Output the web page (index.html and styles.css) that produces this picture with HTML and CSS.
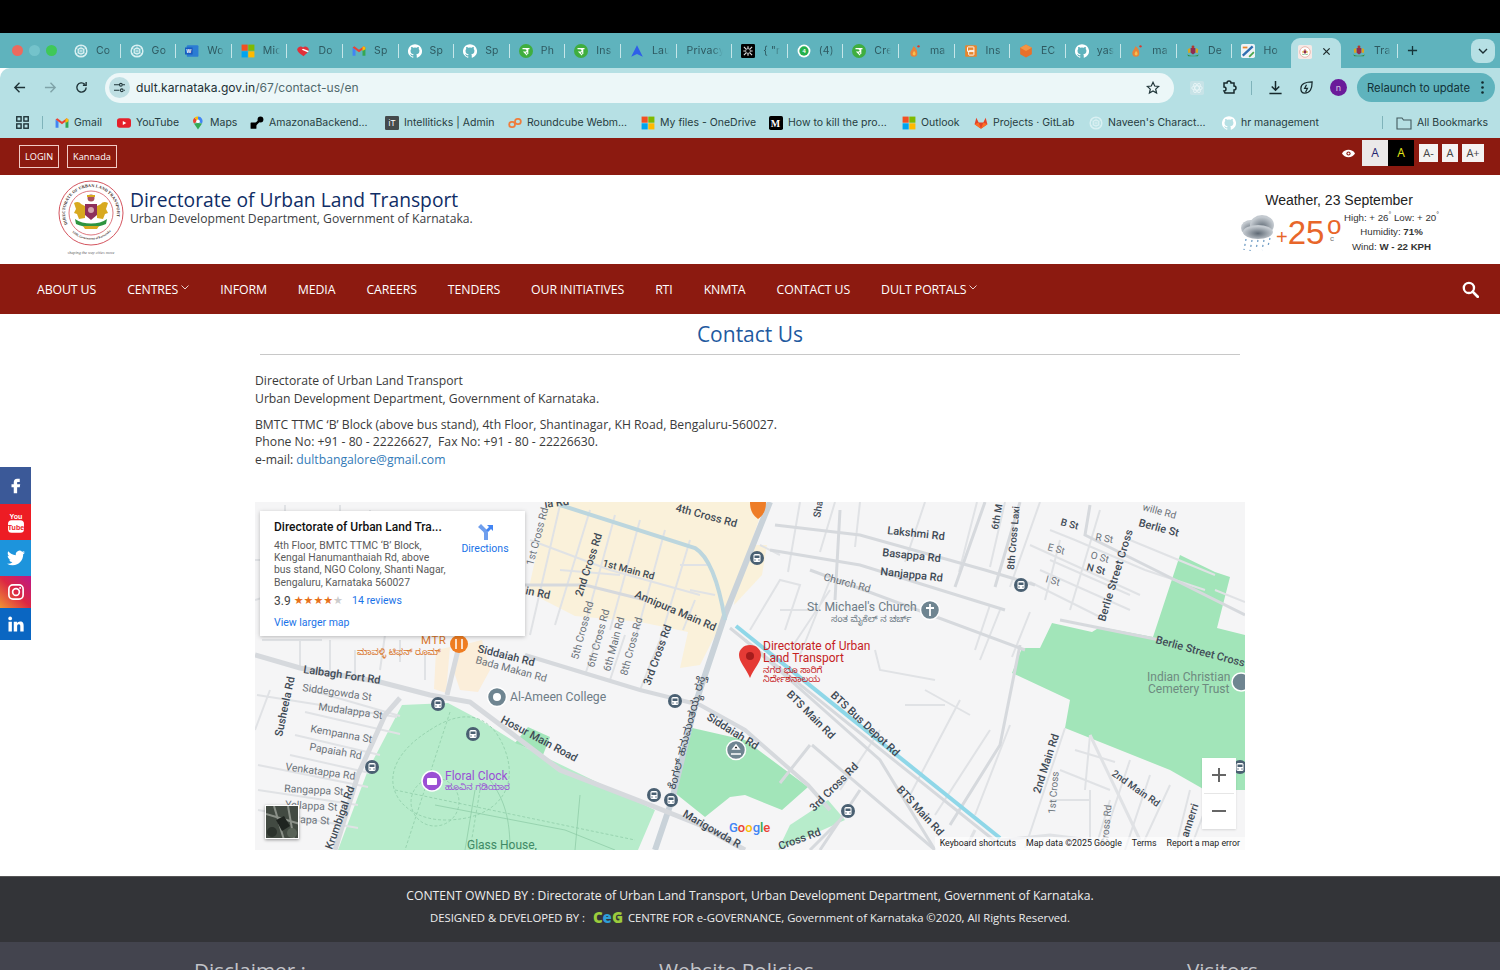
FILE: index.html
```html
<!DOCTYPE html>
<html lang="en">
<head>
<meta charset="utf-8">
<title>Contact Us - Directorate of Urban Land Transport</title>
<link rel="stylesheet" href="styles.css">
</head>
<body>
<svg class="defs" width="0" height="0" aria-hidden="true">
  <symbol id="gh" viewBox="0 0 24 24"><path fill="#fff" d="M12 .3a12 12 0 0 0-3.800 23.400c.6.100.8-.3.8-.6v-2c-3.300.7-4-1.600-4-1.600-.6-1.400-1.400-1.800-1.400-1.800-1-.7.100-.7.100-.7 1.200.1 1.800 1.200 1.800 1.200 1 1.800 2.800 1.300 3.500 1 .1-.8.400-1.300.8-1.600-2.700-.3-5.500-1.300-5.500-6 0-1.200.5-2.300 1.300-3.100-.2-.4-.6-1.600 0-3.200 0 0 1-.3 3.400 1.200a11.500 11.500 0 0 1 6 0c2.300-1.500 3.300-1.200 3.300-1.200.6 1.600.2 2.800 0 3.200.9.800 1.300 1.900 1.300 3.200 0 4.600-2.800 5.600-5.500 5.900.5.400.9 1 .9 2.200v3.300c0 .3.100.7.800.6A12 12 0 0 0 12 .3z"/></symbol>
  <symbol id="gpt" viewBox="0 0 24 24"><circle cx="12" cy="12" r="10" fill="none" stroke="#d9f0f2" stroke-width="2.500"/><circle cx="12" cy="12" r="5" fill="none" stroke="#d9f0f2" stroke-width="2"/><path d="M12 2v20M3 7l18 10M21 7L3 17" stroke="#d9f0f2" stroke-width="1"/></symbol>
  <symbol id="ms" viewBox="0 0 24 24"><rect x="1" y="1" width="10.500" height="10.500" fill="#f25022"/><rect x="12.500" y="1" width="10.500" height="10.500" fill="#7fba00"/><rect x="1" y="12.500" width="10.500" height="10.500" fill="#00a4ef"/><rect x="12.500" y="12.500" width="10.500" height="10.500" fill="#ffb900"/></symbol>
  <symbol id="gm" viewBox="0 0 24 24"><path fill="#4285f4" d="M1 6v14h5V10z"/><path fill="#34a853" d="M18 10v10h5V6z"/><path fill="#ea4335" d="M1 6l11 8 11-8-3-2-8 6-8-6z"/><path fill="#fbbc04" d="M18 5l2-1 3 2v3l-5 3z"/></symbol>
  <symbol id="pe" viewBox="0 0 24 24"><circle cx="12" cy="12" r="12" fill="#3fae3f"/><path d="M6 8h12M9 8c3 0 5 1 5 3s-3 3-5 3l5 5M15 8v9" fill="none" stroke="#fff" stroke-width="2"/></symbol>
  <symbol id="emblem" viewBox="0 0 24 24"><circle cx="12" cy="5" r="2.500" fill="#b0392e"/><path d="M3 9l4-2 1 7-4 2zM21 9l-4-2-1 7 4 2z" fill="#d9a520"/><path d="M8 7h8v8l-4 3-4-3z" fill="#8d2b52"/><path d="M2 18c5 3 15 3 20 0l-2 3H4z" fill="#2e8b3d"/></symbol>
  <symbol id="fire" viewBox="0 0 24 24"><path fill="#e8833a" d="M4 16c0-5 4-6 5-12 4 2 7 6 7 12a6 6 0 0 1-12 0z"/><circle cx="18" cy="4" r="2" fill="#d93a2f"/><path fill="#f6c04d" d="M8 17c0-3 2-3 2-5 2 1 3 3 3 5a2.500 2.500 0 0 1-5 0z"/></symbol>
  <symbol id="box" viewBox="0 0 24 24"><rect x="2" y="2" width="20" height="20" rx="2" fill="#e8852c"/><rect x="6" y="5" width="11" height="8" rx="1" fill="none" stroke="#fff" stroke-width="1.600"/><rect x="8" y="11" width="9" height="8" rx="1" fill="none" stroke="#fff" stroke-width="1.600"/></symbol>
  <symbol id="bus" viewBox="0 0 14 14"><circle cx="7" cy="7" r="7" fill="#4a6072"/><rect x="3.500" y="3" width="7" height="8" rx="1.500" fill="#fff"/><rect x="4.500" y="4.500" width="5" height="2.500" fill="#4a6072"/><circle cx="5" cy="9" r=".7" fill="#4a6072"/><circle cx="9" cy="9" r=".7" fill="#4a6072"/></symbol>
</svg>

<div class="chrome">
  <div class="notch"></div>
  <div class="tabs">
    <div class="lights"><i class="light red"></i><i class="light pale"></i><i class="light green"></i></div>
    <div class="tab"><svg class="fav"><use href="#gpt"/></svg><span class="tab-t">Co</span></div>
    <div class="tab"><svg class="fav"><use href="#gpt"/></svg><span class="tab-t">Go</span></div>
    <div class="tab"><svg class="fav" viewBox="0 0 24 24"><rect x="3" y="2" width="20" height="20" rx="2" fill="#2b7cd3"/><rect x="0" y="6" width="13" height="12" fill="#185abd"/><text x="6.500" y="15.500" class="word-w">W</text></svg><span class="tab-t">Wo</span></div>
    <div class="tab"><svg class="fav"><use href="#ms"/></svg><span class="tab-t">Mic</span></div>
    <div class="tab"><svg class="fav" viewBox="0 0 24 24"><path fill="#e0303a" d="M2 9a6 6 0 0 1 10-3 6 6 0 0 1 10 3c0 5-6 9-9 12C9 18 2 14 2 9z"/><path fill="#fff" d="M12 8l10 4-2 2-10-4z"/></svg><span class="tab-t">Do</span></div>
    <div class="tab"><svg class="fav"><use href="#gm"/></svg><span class="tab-t">Sp</span></div>
    <div class="tab"><svg class="fav"><use href="#gh"/></svg><span class="tab-t">Sp</span></div>
    <div class="tab"><svg class="fav"><use href="#gh"/></svg><span class="tab-t">Sp</span></div>
    <div class="tab"><svg class="fav"><use href="#pe"/></svg><span class="tab-t">Ph</span></div>
    <div class="tab"><svg class="fav"><use href="#pe"/></svg><span class="tab-t">Ins</span></div>
    <div class="tab"><svg class="fav" viewBox="0 0 24 24"><path fill="#2f5fe8" d="M12 2l10 20-10-5-10 5z"/></svg><span class="tab-t">Lau</span></div>
    <div class="tab tab-plain"><span class="tab-t wide">Privacy</span></div>
    <div class="tab"><svg class="fav" viewBox="0 0 24 24"><rect width="24" height="24" rx="2" fill="#000"/><path d="M5 5l14 14M19 5L5 19M12 4v16M4 12h16" stroke="#ddd" stroke-width="2"/><circle cx="12" cy="12" r="4" fill="#000" stroke="#ddd"/></svg><span class="tab-t">{ "r</span></div>
    <div class="tab"><svg class="fav" viewBox="0 0 24 24"><circle cx="12" cy="12" r="11" fill="#fff"/><circle cx="12" cy="12" r="8" fill="#25b04c"/><text x="12" y="15.500" class="wa-n">4</text></svg><span class="tab-t">(4)</span></div>
    <div class="tab"><svg class="fav"><use href="#pe"/></svg><span class="tab-t">Cre</span></div>
    <div class="tab"><svg class="fav"><use href="#fire"/></svg><span class="tab-t">ma</span></div>
    <div class="tab"><svg class="fav"><use href="#box"/></svg><span class="tab-t">Ins</span></div>
    <div class="tab"><svg class="fav" viewBox="0 0 24 24"><path fill="#e8702a" d="M12 1l10 5.500v11L12 23 2 17.500v-11z"/><path fill="#f29544" d="M12 1l10 5.500-10 5.500L2 6.500z"/></svg><span class="tab-t">EC</span></div>
    <div class="tab"><svg class="fav"><use href="#gh"/></svg><span class="tab-t">yas</span></div>
    <div class="tab"><svg class="fav"><use href="#fire"/></svg><span class="tab-t">ma</span></div>
    <div class="tab"><svg class="fav"><use href="#emblem"/></svg><span class="tab-t">De</span></div>
    <div class="tab tab-nosep"><svg class="fav" viewBox="0 0 24 24"><rect width="24" height="24" rx="3" fill="#eef3f6"/><path d="M3 20L20 4" stroke="#2f6fb0" stroke-width="4"/><path d="M14 22l8-8" stroke="#4aa54a" stroke-width="3"/><path d="M3 6h8" stroke="#e8852c" stroke-width="3"/></svg><span class="tab-t">Ho</span></div>
    <div class="tab-active"><svg class="fav" viewBox="0 0 24 24"><rect width="24" height="24" rx="3" fill="#f6e9e6"/><circle cx="12" cy="12" r="9" fill="#fff" stroke="#dc8d80"/><use href="#emblem" x="6" y="6" width="12" height="12"/></svg><svg class="tab-x" viewBox="0 0 10 10"><path d="M1.500 1.500l7 7M8.500 1.500l-7 7" stroke="#1e2a2c" stroke-width="1.400"/></svg></div>
    <div class="tab tab-last"><svg class="fav"><use href="#emblem"/></svg><span class="tab-t">Tra</span></div>
    <svg class="plus" viewBox="0 0 12 12"><path d="M6 1v10M1 6h10" stroke="#16353a" stroke-width="1.400"/></svg>
    <div class="tab-menu"><svg viewBox="0 0 10 6" width="10" height="6"><path d="M1 1l4 4 4-4" fill="none" stroke="#1b2f33" stroke-width="1.400"/></svg></div>
  </div>

  <div class="toolbar">
    <svg class="tool" viewBox="0 0 14 14"><path d="M13 7H2M7 2L2 7l5 5" fill="none" stroke="#1f3438" stroke-width="1.500"/></svg>
    <svg class="tool dim" viewBox="0 0 14 14"><path d="M1 7h11M7 2l5 5-5 5" fill="none" stroke="#7fa3a8" stroke-width="1.500"/></svg>
    <svg class="tool" viewBox="0 0 14 14"><path d="M12 7a5 5 0 1 1-1.500-3.600M12 1v3.500H8.500" fill="none" stroke="#1f3438" stroke-width="1.500"/></svg>
    <div class="url">
      <span class="url-ico"><svg viewBox="0 0 14 12" width="13" height="11"><path d="M1 3h6M1 9h6M10 3h3M12 9h1" stroke="#1f3438" stroke-width="1.200"/><circle cx="8.500" cy="3" r="1.500" fill="none" stroke="#1f3438" stroke-width="1.100"/><circle cx="9.500" cy="9" r="1.500" fill="none" stroke="#1f3438" stroke-width="1.100"/></svg></span>
      <span class="url-host">dult.karnataka.gov.in<span class="url-path">/67/contact-us/en</span></span>
      <svg class="star" viewBox="0 0 14 14"><path d="M7 1.300l1.700 3.700 4 .4-3 2.700.9 4L7 10l-3.600 2.100.9-4-3-2.700 4-.4z" fill="none" stroke="#1f3438" stroke-width="1.200"/></svg>
    </div>
    <div class="tool-right">
      <svg class="ext" viewBox="0 0 16 16"><rect width="16" height="16" rx="2" fill="#c7e3e7"/><g fill="none" stroke="#e9f6f7"><ellipse cx="8" cy="8" rx="6" ry="2.400"/><ellipse cx="8" cy="8" rx="6" ry="2.400" transform="rotate(60 8 8)"/><ellipse cx="8" cy="8" rx="6" ry="2.400" transform="rotate(120 8 8)"/></g></svg>
      <svg class="puzzle" viewBox="0 0 16 16"><path d="M3 3h3a2 2 0 0 1 4 0h3v3a2 2 0 0 1 0 4v3H4l-1-2a2 2 0 0 0 0-4z" fill="none" stroke="#16282b" stroke-width="1.500"/></svg>
      <i class="tool-sep"></i>
      <svg class="dl" viewBox="0 0 16 16"><path d="M8 1v9M4 7l4 4 4-4M1.500 14.500h13" fill="none" stroke="#16282b" stroke-width="1.600"/></svg>
      <svg class="leaf" viewBox="0 0 16 16"><path d="M14 2c0 7-2 12-8 12-3 0-4-2-4-5 0-5 6-7 12-7zM8 5L6 9h3l-2 4" fill="none" stroke="#16282b" stroke-width="1.300"/></svg>
      <span class="avatar">n</span>
      <div class="relaunch">Relaunch to update<svg class="dots" viewBox="0 0 3 13" width="3" height="13"><circle cx="1.500" cy="1.500" r="1.300" fill="#12292d"/><circle cx="1.500" cy="6.500" r="1.300" fill="#12292d"/><circle cx="1.500" cy="11.500" r="1.300" fill="#12292d"/></svg></div>
    </div>
  </div>

  <div class="bookmarks">
    <svg class="bm-grid" viewBox="0 0 12 12"><g fill="none" stroke="#1f3438" stroke-width="1.300"><rect x=".7" y=".7" width="4" height="4"/><rect x="7.300" y=".7" width="4" height="4"/><rect x=".7" y="7.300" width="4" height="4"/><rect x="7.300" y="7.300" width="4" height="4"/></g></svg>
    <i class="bm-sep"></i>
    <div class="bm b-gmail"><svg class="bm-i"><use href="#gm"/></svg>Gmail</div>
    <div class="bm b-yt"><svg class="bm-i" viewBox="0 0 24 24"><rect y="4" width="24" height="16" rx="4.500" fill="#e5202a"/><path d="M10 8.500l6 3.500-6 3.500z" fill="#fff"/></svg>YouTube</div>
    <div class="bm b-maps"><svg class="bm-i" viewBox="0 0 24 24"><path fill="#34a853" d="M12 23L5 13l7-1 7 1z"/><path fill="#4285f4" d="M12 1a8 8 0 0 1 7 12l-7-3z"/><path fill="#ea4335" d="M6 3l6 6-7 4a8 8 0 0 1 1-10z"/><path fill="#fbbc04" d="M6 3a8 8 0 0 1 6-2v8z"/><circle cx="12" cy="9" r="3" fill="#fff"/></svg>Maps</div>
    <div class="bm b-am"><svg class="bm-i" viewBox="0 0 24 24"><rect x="1" y="11" width="10" height="11" rx="1" fill="#000"/><path d="M9 15l7-7" stroke="#000" stroke-width="4"/><circle cx="18" cy="6" r="5" fill="#000"/></svg>AmazonaBackend...</div>
    <div class="bm b-it"><svg class="bm-i" viewBox="0 0 24 24"><rect width="24" height="24" rx="2" fill="#444a4c"/><text x="12" y="17" class="it-t">iT</text></svg>Intelliticks | Admin</div>
    <div class="bm b-rc"><svg class="bm-i" viewBox="0 0 24 24"><g fill="none" stroke="#ef7d3c" stroke-width="3"><rect x="2" y="10" width="10" height="9" rx="4.500"/><rect x="12" y="5" width="10" height="9" rx="4.500"/></g></svg>Roundcube Webm...</div>
    <div class="bm b-od"><svg class="bm-i"><use href="#ms"/></svg>My files - OneDrive</div>
    <div class="bm b-md"><svg class="bm-i" viewBox="0 0 24 24"><rect width="24" height="24" rx="3" fill="#000"/><text x="11" y="18" class="m-t">M</text></svg>How to kill the pro...</div>
    <div class="bm b-ol"><svg class="bm-i"><use href="#ms"/></svg>Outlook</div>
    <div class="bm b-gl"><svg class="bm-i" viewBox="0 0 24 24"><path fill="#e24329" d="M12 22L1 14 4 3l4 8h8l4-8 3 11z"/><path fill="#fc6d26" d="M12 22L1 14l7-3zM12 22l11-8-7-3z"/></svg>Projects · GitLab</div>
    <div class="bm b-ch"><svg class="bm-i"><use href="#gpt"/></svg>Naveen's Charact...</div>
    <div class="bm b-hr"><svg class="bm-i"><use href="#gh"/></svg>hr management</div>
    <i class="bm-sep2"></i>
    <div class="bm b-all"><svg class="bm-i wide-i" viewBox="0 0 16 14"><path d="M1 2h5l1.500 2H15v9H1z" fill="none" stroke="#43595d" stroke-width="1.100"/></svg>All Bookmarks</div>
  </div>
</div>

<div class="topbar">
  <div class="top-left"><a class="top-btn">LOGIN</a><a class="top-btn">Kannada</a></div>
  <div class="top-right">
    <svg class="eye" viewBox="0 0 16 10" width="13" height="9"><path d="M0 5c3-6 13-6 16 0-3 6-13 6-16 0z" fill="#fff"/><circle cx="8" cy="5" r="2.600" fill="#8c1a10"/><circle cx="8" cy="5" r="1.300" fill="#fff"/></svg>
    <span class="contrast light-c">A</span><span class="contrast dark-c">A</span>
    <span class="fs fs-1">A-</span><span class="fs fs-2">A</span><span class="fs fs-3">A+</span>
  </div>
</div>

<header class="site-head">
  <div class="brand">
    <svg class="logo" viewBox="0 0 68 76">
      <defs><path id="lg-top" d="M11.500 46a26 26 0 1 1 45 0"/><path id="lg-bot" d="M14 51a27.500 27.500 0 0 0 40 0"/></defs>
      <circle cx="34" cy="33" r="32" fill="#fff" stroke="#d4555f" stroke-width="1"/>
      <circle cx="34" cy="33" r="22" fill="#fff" stroke="#d4555f" stroke-width=".8"/>
      <text class="logo-ring"><textPath href="#lg-top" startOffset="2">DIRECTORATE OF URBAN LAND TRANSPORT</textPath></text>
      <text class="logo-ring2"><textPath href="#lg-bot" startOffset="2">UDD, Government of Karnataka</textPath></text>
      <path d="M17 23c3-2 6-1 7 1l4 2v12l-6 1-2-5-3-1 2-4zM51 23c-3-2-6-1-7 1l-4 2v12l6 1 2-5 3-1-2-4z" fill="#d8a91f"/>
      <path d="M28 24h12v11l-6 5-6-5z" fill="#8d2f5b"/><circle cx="34" cy="18" r="3.500" fill="#a9525f"/><path d="M30 15h8v2h-8z" fill="#d8a91f"/><circle cx="34" cy="30" r="3" fill="#d4a5b0"/>
      <path d="M18 39c8 6 24 6 32 0l-1 5c-8 4-22 4-30 0z" fill="#2e9440"/><path d="M26 46h16l-2 3H28z" fill="#d8a91f"/>
      <text x="34" y="74" class="logo-motto">shaping the way cities move</text>
    </svg>
    <div class="brand-text">
      <h1 class="brand-title">Directorate of Urban Land Transport</h1>
      <p class="brand-sub">Urban Development Department, Government of Karnataka.</p>
    </div>
  </div>
  <div class="weather">
    <div class="w-title">Weather, 23 September</div>
    <div class="w-row">
      <svg class="w-icon" viewBox="0 0 36 38"><defs><radialGradient id="cl" cx=".5" cy=".6"><stop offset="0" stop-color="#5f6a75"/><stop offset="1" stop-color="#c4cad0"/></radialGradient></defs><ellipse cx="11" cy="14" rx="10" ry="8" fill="url(#cl)"/><ellipse cx="22" cy="11" rx="12" ry="10" fill="url(#cl)"/><ellipse cx="18" cy="18" rx="15" ry="7" fill="url(#cl)"/><g stroke="#6f9cc4" stroke-width="1.300" stroke-dasharray="2 3"><path d="M6 25l-2 11M12 26l-2 11M18 26l-2 9M24 26l-2 10M30 24l-2 8"/></g></svg>
      <div class="w-temp"><span class="w-plus">+</span>25<span class="w-deg">o</span><span class="w-c">c</span></div>
      <div class="w-info">
        <div>High: + 26<sup>°</sup> Low: + 20<sup>°</sup></div>
        <div>Humidity: <b>71%</b></div>
        <div>Wind: <b>W - 22 KPH</b></div>
      </div>
    </div>
  </div>
</header>

<nav class="nav">
  <a class="nav-a">ABOUT US</a>
  <a class="nav-a">CENTRES<svg class="chev" viewBox="0 0 8 5"><path d="M.5.500L4 4 7.500.500" fill="none" stroke="#fff" stroke-width=".8"/></svg></a>
  <a class="nav-a">INFORM</a>
  <a class="nav-a">MEDIA</a>
  <a class="nav-a">CAREERS</a>
  <a class="nav-a">TENDERS</a>
  <a class="nav-a">OUR INITIATIVES</a>
  <a class="nav-a">RTI</a>
  <a class="nav-a">KNMTA</a>
  <a class="nav-a">CONTACT US</a>
  <a class="nav-a">DULT PORTALS<svg class="chev" viewBox="0 0 8 5"><path d="M.5.500L4 4 7.500.500" fill="none" stroke="#fff" stroke-width=".8"/></svg></a>
  <svg class="search" viewBox="0 0 16 16"><circle cx="6.500" cy="6.500" r="4.800" fill="none" stroke="#fff" stroke-width="2.200"/><path d="M10 10l4.800 4.800" stroke="#fff" stroke-width="2.600" stroke-linecap="round"/></svg>
</nav>

<aside class="social">
  <a class="soc s-fb"><svg viewBox="0 0 24 24"><path fill="#fff" d="M14 8h3V3.500h-3.500C10.500 3.500 9 5.500 9 8.500V11H6v4h3v8h4.500v-8H17l.6-4h-4.100V8.800c0-.5.100-.8.500-.8z"/></svg></a>
  <a class="soc s-yt"><svg viewBox="0 0 20 26"><text x="10" y="9" class="yt-a">You</text><rect x="1" y="10.500" width="18" height="14" rx="4" fill="#fff"/><text x="10" y="21.500" class="yt-b">Tube</text></svg></a>
  <a class="soc s-tw"><svg viewBox="0 0 24 24"><path fill="#fff" d="M23.950 4.570a10 10 0 0 1-2.820.77 4.960 4.960 0 0 0 2.160-2.720c-.95.55-2 .95-3.120 1.190a4.920 4.920 0 0 0-8.380 4.480C7.690 8.090 4.070 6.130 1.640 3.160a4.820 4.820 0 0 0-.67 2.480c0 1.710.87 3.210 2.190 4.100a4.900 4.900 0 0 1-2.230-.61v.06c0 2.390 1.700 4.380 3.950 4.830a5 5 0 0 1-2.210.08 4.940 4.940 0 0 0 4.600 3.420A9.870 9.870 0 0 1 0 19.540a14 14 0 0 0 7.560 2.210c9.050 0 14-7.500 14-13.980 0-.21 0-.42-.02-.63a9.940 9.940 0 0 0 2.410-2.540z"/></svg></a>
  <a class="soc s-ig"><svg viewBox="0 0 24 24"><rect x="2.500" y="2.500" width="19" height="19" rx="5.500" fill="none" stroke="#fff" stroke-width="2.200"/><circle cx="12" cy="12" r="4.500" fill="none" stroke="#fff" stroke-width="2.200"/><circle cx="17.500" cy="6.500" r="1.300" fill="#fff"/></svg></a>
  <a class="soc s-in"><svg viewBox="0 0 24 24"><rect x="2" y="9" width="4.500" height="13" fill="#fff"/><circle cx="4.200" cy="4.500" r="2.500" fill="#fff"/><path fill="#fff" d="M9 9h4.300v1.900c.7-1.200 2.200-2.200 4.200-2.200 4 0 4.700 2.600 4.700 6V22h-4.500v-6.400c0-1.600 0-3.200-2-3.200s-2.200 1.500-2.200 3.100V22H9z"/></svg></a>
</aside>

<main class="content">
  <h2 class="page-title">Contact Us</h2>
  <hr class="rule">
  <p class="para">Directorate of Urban Land Transport<br>Urban Development Department, Government of Karnataka.</p>
  <p class="para">BMTC TTMC ‘B’ Block (above bus stand), 4th Floor, Shantinagar, KH Road, Bengaluru-560027.<br>Phone No: +91 - 80 - 22226627,&nbsp; Fax No: +91 - 80 - 22226630.<br>e-mail: <a class="mail">dultbangalore@gmail.com</a></p>

  <div class="map">
    <svg class="map-svg" viewBox="255 502 990 348" width="990" height="348">
      <rect x="255" y="502" width="990" height="348" fill="#f5f5f6"/>
      <!-- land use -->
      <path d="M548 502H765L728 610 700 665 680 668 688 632 640 622 575 616 528 592z" fill="#faf1da"/>
      <path d="M742 545h25l-5 30-28 30z" fill="#faf1da"/>
      <path d="M462 645l20-5 8 30-12 22-18-2-6-18zM436 650l14-3-4 46-12-4z" fill="#fbeeda"/>
      <path d="M402 705L448 703 480 720 520 745 655 810 638 850H338L368 770z" fill="#b7eccb"/>
      <path d="M528 727L550 737 543 755 515 743z" fill="#a2e5b9"/>
      <path d="M688 727L745 740 808 787 782 810 745 795 730 797 705 817 675 793z" fill="#a2e5b9"/>
      <path d="M1180 555L1215 572 1230 577 1217 628 1245 635V790H1205L1170 770 1065 728 1070 700 1012 673 1022 648 1040 648 1052 623 1092 632 1100 627 1153 637z" fill="#a2e5b9"/>
      <path d="M828 800L845 820 778 850 790 825z" fill="#b7eccb"/>
      <!-- park paths -->
      <g fill="none" stroke="#8ac9a3" stroke-width=".7" stroke-dasharray="3 2">
        <path d="M430 730c30-20 60-20 75 20s-10 70-60 70-80-50-15-90z"/>
        <path d="M450 712l-45 138M395 790l240 50M480 790l-10 60"/>
        <circle cx="435" cy="802" r="24"/>
      </g>
      <g fill="none" stroke="#8ac9a3" stroke-width=".7">
        <path d="M435 805l130 25 50 20M475 790l-10 60M490 780c15 20 20 40 20 70M580 795l-5 55"/>
      </g>
      <!-- minor roads -->
      <g fill="none" stroke="#e0e2e5" stroke-width="2">
        <path d="M255 560h100M285 505v60M310 520v45M340 505v45M370 510v40M255 600l50-15M262 640h60M300 640v30M330 640v30M355 650v25M385 635l-5 35M400 640v22M425 655v25"/>
        <path d="M560 505l-30 130M590 510l-35 115M615 515l-30 110M640 520l-30 110M665 530l-30 110M690 540l-30 100M695 600l-12 30M660 640l-20 50M600 630l-15 45M625 635l-15 45"/>
        <path d="M530 540l80 30 90 25M560 570l60 5M680 565h30M690 590l25 5"/>
        <path d="M270 690l-15 40M257 695l140 22M310 690l90 26M305 712l95 22M295 735l85 20M290 755l80 18M258 765l110 22M258 790l100 15M258 810l100 18"/>
        <path d="M800 502l-12 70M835 502l-15 50M860 502l-5 45M925 502l-20 60M977 502l-18 70M1005 502l-15 65M1040 502l-30 85M1060 540l-15 60M1100 510l-30 100"/>
        <path d="M750 630l30-50 20 5-15 45M760 545l20 10M780 610h40M830 580l-30 75M790 650l40-60M990 605l-15 45M1000 610l-20 50M1030 612l-18 45"/>
        <path d="M1050 530l25 10 70 30 60 20M1030 545l110 50M1050 560l80 35M1040 570l90 40M1030 582l70 35M1130 540l85 35M1215 590l30 12"/>
        <path d="M1010 725l-35 90M1065 728l-40 120M1090 735l-5 55M1075 750l40 12M1060 770l50 20M1130 760l-30 90M1150 775l-25 75M1170 785l-30 65M1050 800h40M1090 790v50M1110 800l-15 50M1190 790l-15 60M1205 810l-15 40"/>
        <path d="M960 700l-50 95M990 730l-55 85M880 730l-40 60M925 690l45 25M935 680l-55-10 -5 -20M945 705l-40 0"/>
      </g>
      <!-- larger roads -->
      <g fill="none" stroke="#d6d9dd" stroke-width="3">
        <path d="M770 502L725 615 695 705 672 800 655 850" stroke="#c9d2d9" stroke-width="6"/>
        <path d="M255 655L300 668 380 682 430 695 470 702 560 770 650 805 700 825 745 850" stroke-width="5"/>
        <path d="M458 650L447 695" stroke-width="5"/>
        <path d="M400 698L385 715 358 775 335 850" stroke-width="5"/>
        <path d="M525 655L640 690 700 705 745 730 808 785 830 810" stroke-width="4"/>
        <path d="M730 628L850 725 1000 845"/>
        <path d="M775 525L860 535 985 570 1035 585M770 550L860 565 1005 610M810 570L1025 650"/>
        <path d="M840 510L835 600 M985 502l-30 85M1020 502l-25 85"/>
        <path d="M1090 505l-5 30 60 30 100 50"/>
        <path d="M1020 645l-20 100 -50 80"/>
        <path d="M1060 620l100 20"/>
        <path d="M745 640L880 760 935 850"/>
        <path d="M525 585l60 0 60 15"/>
      </g>
      <path d="M560 505L695 548Q715 560 725 620" fill="none" stroke="#bcd6de" stroke-width="4"/>
      <path d="M812 745L935 850M860 790l-40 60M810 745l-30 38M840 820l-30 30" fill="none" stroke="#d6d9dd" stroke-width="3"/>
      <path d="M736 626L1000 838" fill="none" stroke="#8fd7e8" stroke-width="4"/>
      <path d="M1000 840l50-5 40 5M975 830l-10 20M1090 735l50 105" fill="none" stroke="#e0e2e5" stroke-width="3"/>

      <!-- pins -->
      <path d="M750 502h16c0 10-4 14-8 17-4-3-8-7-8-17z" fill="#ee7d28"/>
      <use href="#bus" x="750" y="551" width="14" height="14"/>
      <use href="#bus" x="1014" y="578" width="14" height="14"/>
      <use href="#bus" x="431" y="697" width="14" height="14"/>
      <use href="#bus" x="466" y="727" width="14" height="14"/>
      <use href="#bus" x="365" y="760" width="14" height="14"/>
      <use href="#bus" x="668" y="694" width="14" height="14"/>
      <use href="#bus" x="647" y="788" width="14" height="14"/>
      <use href="#bus" x="664" y="793" width="14" height="14"/>
      <use href="#bus" x="841" y="804" width="14" height="14"/>
      <use href="#bus" x="1233" y="760" width="14" height="14"/>

      <circle cx="459" cy="644" r="9" fill="#ef7d22"/><path d="M456 639v10M462 639v10" stroke="#fff" stroke-width="1.500"/>
      <circle cx="497" cy="697" r="9.500" fill="#6f8591" stroke="#fff" stroke-width="1.500"/><circle cx="497" cy="697" r="4" fill="#fff"/>
      <circle cx="736" cy="750" r="9.500" fill="#6f8591" stroke="#fff" stroke-width="1.500"/><path d="M733 749l3-4 3 4zM731 754h10" stroke="#fff" stroke-width="1.600"/>
      <circle cx="930" cy="610" r="9.500" fill="#6f8591" stroke="#fff" stroke-width="1.500"/><path d="M930 604v12M926 608h8" stroke="#fff" stroke-width="1.800"/>
      <circle cx="1241" cy="682" r="9" fill="#6f8591" stroke="#fff" stroke-width="1.500"/>
      <circle cx="432" cy="781" r="10" fill="#9b4fd4" stroke="#fff" stroke-width="1.500"/><rect x="427" y="778" width="10" height="7" rx="1" fill="#fff"/>
      <path d="M750 645c7 0 11 5 11 10 0 7-7 13-11 23-4-10-11-16-11-23 0-5 4-10 11-10z" fill="#e53a35"/><circle cx="750" cy="656" r="4" fill="#a51c1c"/>

      <!-- labels -->
      <g class="lb-dark">
        <text x="545" y="508" transform="rotate(-8 545 508)">ia Rd</text>
        <text x="675" y="511" transform="rotate(15 675 511)">4th Cross Rd</text>
        <text x="525" y="594" transform="rotate(12 525 594)">in Rd</text>
        <text x="582" y="597" transform="rotate(-72 582 597)">2nd Cross Rd</text>
        <text x="602" y="566" transform="rotate(15 602 566)" class="lb-sm">1st Main Rd</text>
        <text x="634" y="597" transform="rotate(23 634 597)">Annipura Main Rd</text>
        <text x="650" y="686" transform="rotate(-70 650 686)">3rd Cross Rd</text>
        <text x="477" y="652" transform="rotate(14 477 652)">Siddaiah Rd</text>
        <text x="303" y="673" transform="rotate(8 303 673)">Lalbagh Fort Rd</text>
        <text x="500" y="722" transform="rotate(28 500 722)">Hosur Main Road</text>
        <text x="706" y="719" transform="rotate(32 706 719)">Siddaiah Rd</text>
        <text x="786" y="695" transform="rotate(45 786 695)">BTS Main Rd</text>
        <text x="830" y="696" transform="rotate(43 830 696)">BTS Bus Depot Rd</text>
        <text x="896" y="790" transform="rotate(47 896 790)">BTS Main Rd</text>
        <text x="682" y="816" transform="rotate(30 682 816)">Marigowda R</text>
        <text x="887" y="534" transform="rotate(6 887 534)">Lakshmi Rd</text>
        <text x="882" y="556" transform="rotate(6 882 556)">Basappa Rd</text>
        <text x="880" y="575" transform="rotate(6 880 575)">Nanjappa Rd</text>
        <text x="1060" y="525" transform="rotate(15 1060 525)" class="lb-sm">B St</text>
        <text x="1138" y="526" transform="rotate(15 1138 526)">Berlie St</text>
        <text x="1086" y="570" transform="rotate(15 1086 570)" class="lb-sm">N St</text>
        <text x="1155" y="643" transform="rotate(15 1155 643)">Berlie Street Cross</text>
        <text x="1014" y="570" transform="rotate(-85 1014 570)" class="lb-sm">8th Cross Laxi</text>
        <text x="998" y="530" transform="rotate(-80 998 530)" class="lb-sm">6th M</text>
        <text x="1105" y="622" transform="rotate(-73 1105 622)" class="lb-wide">Berlie Street Cross</text>
        <text x="820" y="518" transform="rotate(-80 820 518)" class="lb-sm">Sha</text>
        <text x="814" y="812" transform="rotate(-45 814 812)">3rd Cross Rd</text>
        <text x="780" y="850" transform="rotate(-20 780 850)">Cross Rd</text>
        <text x="1040" y="794" transform="rotate(-72 1040 794)">2nd Main Rd</text>
        <text x="1111" y="775" transform="rotate(35 1111 775)" class="lb-sm">2nd Main Rd</text>
        <text x="1188" y="838" transform="rotate(-72 1188 838)">annerri</text>
        <text x="282" y="737" transform="rotate(-78 282 737)">Susheela Rd</text>
        <text x="332" y="850" transform="rotate(-70 332 850)">Krumbigal Rd</text>
      </g>
      <g class="lb-grey">
        <text x="533" y="566" transform="rotate(-75 533 566)">1st Cross Rd</text>
        <text x="578" y="660" transform="rotate(-75 578 660)">5th Cross Rd</text>
        <text x="594" y="668" transform="rotate(-75 594 668)">6th Cross Rd</text>
        <text x="610" y="672" transform="rotate(-75 610 672)">6th Main Rd</text>
        <text x="627" y="676" transform="rotate(-75 627 676)">8th Cross Rd</text>
        <text x="475" y="663" transform="rotate(15 475 663)">Bada Makan Rd</text>
        <text x="302" y="691" transform="rotate(8 302 691)">Siddegowda St</text>
        <text x="318" y="710" transform="rotate(8 318 710)">Mudalappa St</text>
        <text x="310" y="732" transform="rotate(10 310 732)">Kempanna St</text>
        <text x="309" y="750" transform="rotate(10 309 750)">Papaiah Rd</text>
        <text x="285" y="770" transform="rotate(8 285 770)">Venkatappa Rd</text>
        <text x="284" y="792" transform="rotate(3 284 792)">Rangappa St</text>
        <text x="285" y="808" transform="rotate(3 285 808)">Yellappa St</text>
        <text x="300" y="823" transform="rotate(3 300 823)">apa St</text>
        <text x="823" y="580" transform="rotate(15 823 580)">Church Rd</text>
        <text x="1047" y="550" transform="rotate(15 1047 550)" class="lb-sm">E St</text>
        <text x="1095" y="540" transform="rotate(10 1095 540)" class="lb-sm">R St</text>
        <text x="1090" y="558" transform="rotate(15 1090 558)" class="lb-sm">O St</text>
        <text x="1045" y="582" transform="rotate(15 1045 582)" class="lb-sm">I St</text>
        <text x="1142" y="510" transform="rotate(15 1142 510)" class="lb-sm">wille Rd</text>
        <text x="1055" y="814" transform="rotate(-85 1055 814)" class="lb-sm">1st Cross</text>
        <text x="1108" y="845" transform="rotate(-85 1108 845)" class="lb-sm">Cross Rd</text>
      </g>
      <text x="510" y="701" class="lb-poi">Al-Ameen College</text>
      <text x="807" y="611" class="lb-poi">St. Michael's Church</text>
      <text x="831" y="622" class="lb-kn lb-kn-grey">ಸಂತ ಮೈಕೆಲ್ ನ ಚರ್ಚ್</text>
      <text x="1147" y="681" class="lb-poi2">Indian Christian</text>
      <text x="1148" y="693" class="lb-poi2">Cemetery Trust</text>
      <text x="467" y="849" class="lb-park">Glass House,</text>
      <text x="421" y="644" class="lb-mtr">MTR</text>
      <text x="357" y="655" class="lb-kn lb-kn-orange">ಮಾವಳ್ಳಿ ಟಿಫನ್ ರೂಮ್</text>
      <text x="445" y="780" class="lb-floral">Floral Clock</text>
      <text x="445" y="790" class="lb-kn lb-kn-purple">ಹೂವಿನ ಗಡಿಯಾರ</text>
      <text x="763" y="650" class="lb-red">Directorate of Urban</text>
      <text x="763" y="662" class="lb-red">Land Transport</text>
      <text x="763" y="673" class="lb-kn lb-kn-red">ನಗರ ಭೂ ಸಾರಿಗೆ</text>
      <text x="763" y="682" class="lb-kn lb-kn-red">ನಿರ್ದೇಶನಾಲಯ</text>
      <text x="675" y="790" transform="rotate(-75 675 790)" class="lb-kn lb-kn-dark">ಕೆಂಗಲ್ ಹನುಮಂತಯ್ಯ ರಸ್ತೆ</text>
      <text x="729" y="832" class="lb-google"><tspan fill="#4285f4">G</tspan><tspan fill="#ea4335">o</tspan><tspan fill="#fbbc04">o</tspan><tspan fill="#4285f4">g</tspan><tspan fill="#34a853">l</tspan><tspan fill="#ea4335">e</tspan></text>
    </svg>

    <div class="info-card">
      <div class="info-main">
        <div class="info-title">Directorate of Urban Land Tra...</div>
        <div class="info-addr">4th Floor, BMTC TTMC ‘B’ Block,<br>Kengal Hanumanthaiah Rd, above<br>bus stand, NGO Colony, Shanti Nagar,<br>Bengaluru, Karnataka 560027</div>
        <div class="info-rate"><span class="info-score">3.9</span><span class="stars">★★★★<span class="star-off">★</span></span><a class="info-link rev">14 reviews</a></div>
        <a class="info-link larger">View larger map</a>
      </div>
      <div class="info-dir">
        <svg class="dir-ico" viewBox="0 0 18 18"><path d="M2 4l3-3 5 5c2 2 2 3 2 5v6H8v-6c0-1 0-1.500-1-2.500z" fill="#6f9eed"/><path d="M10 7l3-3-2-2h6v6l-2-2-3 3z" fill="#4285f4"/></svg>
        <a class="info-link">Directions</a>
      </div>
    </div>
    <div class="sat"><svg viewBox="0 0 34 34" width="34" height="34"><rect width="34" height="34" fill="#424a42"/><path d="M0 8l34 10M8 0l10 34M22 0l6 34" stroke="#8a9088" stroke-width="2"/><path d="M10 14l8-4 6 10-8 5z" fill="#1f2420"/><circle cx="26" cy="27" r="5" fill="#596358"/><circle cx="6" cy="26" r="5" fill="#2b322c"/></svg></div>
    <div class="zoom">
      <div class="zoom-b"><svg viewBox="0 0 16 16" width="16" height="16"><path d="M8 1v14M1 8h14" stroke="#666" stroke-width="2"/></svg></div>
      <i class="zoom-sep"></i>
      <div class="zoom-b"><svg viewBox="0 0 16 16" width="16" height="16"><path d="M1 8h14" stroke="#666" stroke-width="2"/></svg></div>
    </div>
    <div class="attrib"><span>Keyboard shortcuts</span><span>Map data ©2025 Google</span><span>Terms</span><span>Report a map error</span></div>
  </div>
</main>

<footer class="footer">
  <div class="foot-top">
    <p class="foot-line">CONTENT OWNED BY : Directorate of Urban Land Transport, Urban Development Department, Government of Karnataka.</p>
    <p class="foot-line foot-line2">DESIGNED &amp; DEVELOPED BY :&nbsp;
      <span class="ceg"><b class="c-g">C</b><b class="c-b">e</b><b class="c-g">G</b></span>
      CENTRE FOR e-GOVERNANCE, Government of Karnataka ©2020, All Rights Reserved.</p>
  </div>
  <div class="foot-links">
    <div class="foot-h h-1">Disclaimer :</div>
    <div class="foot-h h-2">Website Policies</div>
    <div class="foot-h h-3">Visitors</div>
  </div>
</footer>
</body>
</html>
```
FILE: styles.css
```css
* { box-sizing: border-box; }
html, body { margin: 0; height: 970px; overflow: hidden; background: #fff; }
body { width: 1500px; font-family: "Open Sans", sans-serif; color: #333; position: relative; }
.defs { position: absolute; }
p { margin: 0; }
a { text-decoration: none; }

/* browser chrome */
.chrome { font-family: Inter, "Noto Sans", sans-serif; }
.notch { height: 33px; background: #000; }
.tabs { height: 35px; background: #5fb3bd; display: flex; align-items: center; position: relative; color: #2e5960; font-size: 10.500px; }
.lights { width: 65px; display: flex; gap: 6px; padding-left: 12px; }
.light { width: 11px; height: 11px; border-radius: 50%; display: block; }
.light.red { background: #ec6a5e; }
.light.pale { background: #74c3cb; }
.light.green { background: #3fc858; }
.tab { width: 55.600px; height: 14px; display: flex; align-items: center; padding-left: 9px; gap: 8px; border-right: 1.500px solid #c5e6e9; flex: none; }
.tab-nosep { border-right: 0; width: 58.500px; }
.tab-plain { padding-left: 10px; }
.fav { width: 14px; height: 14px; flex: none; }
.tab-t { width: 17px; overflow: hidden; white-space: nowrap; letter-spacing: .2px; -webkit-mask-image: linear-gradient(90deg,#000 70%,transparent); mask-image: linear-gradient(90deg,#000 70%,transparent); }
.tab-t.wide { width: 36px; }
.tab-active { width: 50px; height: 30px; margin-top: 5px; background: #b6e0e4; border-radius: 9px 9px 0 0; display: flex; align-items: center; justify-content: space-between; padding: 0 10px 3px 7px; flex: none; position: relative; }
.tab-x { width: 9px; height: 9px; }
.tab-last { width: 57px; padding-left: 11px; }
.plus { width: 11px; height: 11px; margin-left: 9px; }
.tab-menu { width: 24px; height: 24px; background: #b6e0e4; border-radius: 8px; display: flex; align-items: center; justify-content: center; margin-left: 53px; }
.word-w { font: bold 9px "Liberation Sans", sans-serif; fill: #fff; text-anchor: middle; }
.wa-n { font: bold 10px "Liberation Sans", sans-serif; fill: #fff; text-anchor: middle; }
.it-t { font: 14px "Liberation Sans", sans-serif; fill: #fff; text-anchor: middle; }
.m-t { font: bold 17px "Liberation Serif", serif; fill: #fff; text-anchor: middle; }

.toolbar { height: 37px; background: #b6e0e4; display: flex; align-items: center; padding: 2px 0 0 13px; border-radius: 10px 0 0 0; color: #1f3438; }
.tool { width: 13px; height: 13px; margin-right: 18px; flex: none; }
.url { width: 1069px; height: 30px; margin-left: -1px; border-radius: 15px; background: #ecf7f8; display: flex; align-items: center; padding-left: 4px; position: relative; flex: none; }
.url-ico { width: 21px; height: 21px; border-radius: 50%; background: #bfdfe3; display: flex; align-items: center; justify-content: center; }
.url-host { margin-left: 6px; font-size: 12.100px; color: #1d3135; }
.url-path { color: #51696d; }
.star { position: absolute; right: 14px; top: 8px; width: 14px; height: 14px; }
.tool-right { display: flex; align-items: center; flex: none; margin-left: 16px; }
.ext { width: 14px; height: 14px; }
.puzzle { width: 16px; height: 16px; margin-left: 17px; }
.tool-sep { width: 1px; height: 14px; background: #7fb3ba; margin-left: 14px; }
.dl { width: 15px; height: 15px; margin-left: 16px; }
.leaf { width: 15px; height: 15px; margin-left: 16px; }
.avatar { width: 17px; height: 17px; border-radius: 50%; background: #6a1b9a; color: #d8c8e2; font-size: 9px; display: flex; align-items: center; justify-content: center; margin-left: 16px; }
.relaunch { width: 138px; height: 29px; border-radius: 15px; background: #5fb3bd; margin-left: 10px; display: flex; align-items: center; justify-content: space-between; padding: 0 11px 0 10px; font-size: 11.300px; color: #123238; white-space: nowrap; }
.bookmarks { height: 33px; background: #b6e0e4; display: flex; align-items: center; font-size: 10.500px; color: #263c40; white-space: nowrap; position: relative; padding: 2px 0 0 16px; }
.bm-grid { width: 13px; height: 13px; flex: none; }
.bm-sep { width: 1px; height: 13px; background: #7fb3ba; margin: 0 13px; flex: none; }
.bm { display: flex; align-items: center; gap: 5px; flex: none; }
.bm-i { width: 14px; height: 14px; flex: none; }
.wide-i { width: 16px; }
.b-gmail { margin-left: -1px; width: 62px; }
.b-yt { width: 74px; }
.b-maps { width: 59px; }
.b-am { width: 135px; }
.b-it { width: 123px; }
.b-rc { width: 133px; }
.b-od { width: 128px; }
.b-md { width: 133px; }
.b-ol { width: 72px; }
.b-gl { width: 115px; }
.b-ch { width: 133px; }
.b-hr { width: 160px; }
.bm-sep2 { width: 1px; height: 13px; background: #7fb3ba; flex: none; margin-right: 13px; }

/* site top */
.topbar { height: 37px; background: #8c1a10; display: flex; justify-content: space-between; align-items: flex-start; padding: 7px 16px 0 19px; }
.top-left { display: flex; gap: 8px; }
.top-btn { height: 23px; padding: 0 5px; border: 1px solid #f2cbc5; color: #fff; font-size: 9.200px; line-height: 21px; }
.top-right { display: flex; align-items: flex-start; margin-top: -5px; }
.eye { margin: 9px 7px 0 0; }
.contrast { width: 26px; height: 26px; text-align: center; font: 12px/26px "Open Sans", sans-serif; }
.light-c { background: #ebe9e9; color: #24246e; }
.dark-c { background: #000; color: #e6e81a; }
.fs { height: 18px; margin: 4px 0 0 4px; background: #f5f3f2; color: #444; font-size: 11px; line-height: 18px; text-align: center; }
.fs-1 { width: 19px; margin-left: 5px; }
.fs-2 { width: 16px; }
.fs-3 { width: 22px; }

.site-head { height: 89px; display: flex; justify-content: space-between; padding: 5px 60px 0 57px; }
.brand { display: flex; gap: 5px; }
.logo { width: 68px; height: 76px; flex: none; }
.logo-ring { font: bold 4.200px "Liberation Serif", serif; fill: #3a2a2a; letter-spacing: .1px; }
.logo-ring2 { font: bold 3px "Liberation Serif", serif; fill: #3a2a2a; }
.logo-motto { font: italic 4.200px "Liberation Serif", serif; fill: #666; text-anchor: middle; }
.brand-title { margin: 7px 0 0; font-size: 19.250px; line-height: 26px; font-weight: 400; color: #0f2d66; white-space: nowrap; }
.brand-sub { font-size: 12.150px; line-height: 13px; margin-top: -1px; color: #3d4144; white-space: nowrap; }
.weather { width: 202px; font-family: "Liberation Sans", sans-serif; color: #222; }
.w-title { text-align: center; font-size: 14px; line-height: 16px; margin-top: 12px; }
.w-row { display: flex; align-items: flex-start; margin-top: 1px; }
.w-icon { width: 36px; height: 38px; margin: 5px 0 0 2px; flex: none; }
.w-temp { position: relative; margin-top: 5px; color: #e8662a; font-size: 33px; line-height: 38px; width: 68px; flex: none; white-space: nowrap; }
.w-plus { font-size: 20px; }
.w-deg { font-size: 26px; line-height: 18px; position: absolute; left: 51px; top: 2px; }
.w-c { font-size: 8px; line-height: 10px; color: #777; position: absolute; left: 54px; top: 20px; }
.w-info { font-size: 9.700px; line-height: 14.500px; margin-top: 1.500px; text-align: center; color: #333; white-space: nowrap; }
.w-info sup { font-size: 7px; line-height: 0; }

.nav { height: 50px; background: #8c1a10; display: flex; align-items: center; padding: 0 21px 0 37px; gap: 31px; position: relative; }
.nav-a { color: #fff; font-size: 12.300px; white-space: nowrap; display: flex; letter-spacing: -.1px; }
.chev { width: 8px; height: 5px; margin: 4px 0 0 3px; }
.search { width: 17px; height: 17px; margin-left: auto; }

.social { position: absolute; left: 0; top: 467px; width: 31px; }
.soc { display: flex; align-items: center; justify-content: center; }
.soc svg { width: 18px; height: 18px; }
.s-fb { height: 37px; background: #3b5998; }
.s-fb svg { margin-top: -2px; }
.s-yt { height: 36px; background: #ed1c24; }
.s-yt svg { height: 23px; }
.s-tw { height: 36px; background: #1d94dc; }
.s-ig { height: 32px; background: linear-gradient(45deg, #f09433, #dc2743 50%, #bc1888); }
.s-in { height: 32px; background: #0a66c2; }
.yt-a { font: bold 8px "Liberation Sans", sans-serif; fill: #fff; text-anchor: middle; }
.yt-b { font: bold 8px "Liberation Sans", sans-serif; fill: #ed1c24; text-anchor: middle; }

/* content */
.content { padding: 0 255px; height: 562px; }
.page-title { margin: 0; text-align: center; color: #1f5a9f; font-size: 21px; line-height: 30px; padding-top: 5px; height: 40px; font-weight: 400; }
.rule { margin: 0 5px; border: 0; border-top: 1px solid #c8c8c8; }
.para { font-size: 12.200px; line-height: 17.400px; color: #3a3a3a; margin-top: 8.500px; white-space: nowrap; }
.rule + .para { margin-top: 17.400px; }
.mail { color: #337ab7; }

.map { width: 990px; height: 348px; margin-top: 34px; position: relative; overflow: hidden; font-family: Roboto, sans-serif; }
.map-svg { display: block; }
.lb-dark text { font: 500 11px Roboto, sans-serif; fill: #3f4a55; }
.lb-grey text { font: 10.500px Roboto, sans-serif; fill: #6c737a; }
.lb-dark text.lb-sm, .lb-grey text.lb-sm { font-size: 10px; }
.lb-dark text.lb-wide { letter-spacing: .2px; }
.lb-poi { font: 12.200px Roboto, sans-serif; fill: #6e7c86; }
.lb-poi2 { font: 12px Roboto, sans-serif; fill: #6e8a80; }
.lb-park { font: 12px Roboto, sans-serif; fill: #3f8a66; }
.lb-mtr { font: 11.500px Roboto, sans-serif; fill: #d9762c; letter-spacing: .5px; }
.lb-floral { font: 12px Roboto, sans-serif; fill: #9a4fd6; }
.lb-red { font: 12px Roboto, sans-serif; fill: #c5221f; }
.lb-google { font: 500 13px Roboto, sans-serif; }
.lb-kn { font: 9px "Noto Sans Kannada", "Noto Sans", sans-serif; }
.lb-kn-grey { fill: #6e7c86; }
.lb-kn-orange { fill: #d9762c; }
.lb-kn-purple { fill: #9a4fd6; }
.lb-kn-red { fill: #c5221f; }
.lb-kn-dark { fill: #3f4a55; font-size: 11px; }

.info-card { position: absolute; left: 5px; top: 9px; width: 265px; height: 125px; background: #fff; box-shadow: 0 1px 4px rgba(0,0,0,.25); padding: 9px 0 0 14px; display: flex; }
.info-main { width: 187px; flex: none; }
.info-title { font-size: 12px; font-weight: 500; color: #111; line-height: 15px; white-space: nowrap; }
.info-addr { font-size: 10.400px; line-height: 12.200px; color: #5b5b5b; margin-top: 5px; white-space: nowrap; }
.info-rate { display: flex; align-items: center; margin-top: 5px; font-size: 12px; line-height: 14px; white-space: nowrap; }
.info-score { color: #444; margin-right: 3px; }
.stars { color: #e7711b; font-size: 11px; font-family: "DejaVu Sans", sans-serif; }
.star-off { color: #ccc; }
.info-link { color: #1a73e8; font-size: 10.500px; }
.rev { margin-left: 9px; }
.larger { display: block; margin-top: 8px; }
.info-dir { width: 58px; margin-left: -5px; display: flex; flex-direction: column; align-items: center; padding-top: 3px; white-space: nowrap; }
.dir-ico { width: 18px; height: 18px; margin-bottom: 1px; }
.sat { position: absolute; left: 10px; top: 303px; width: 34px; height: 34px; border: 1px solid #fff; box-shadow: 0 1px 3px rgba(0,0,0,.4); overflow: hidden; }
.zoom { position: absolute; left: 947px; top: 256px; width: 34px; height: 71px; background: #fff; box-shadow: 0 1px 2px rgba(0,0,0,.12); display: flex; flex-direction: column; align-items: center; }
.zoom-b { height: 35px; width: 34px; display: flex; align-items: center; justify-content: center; }
.zoom-sep { width: 30px; height: 1px; background: #e6e6e6; }
.attrib { position: absolute; right: 0; bottom: 0; height: 13px; display: flex; gap: 10px; padding: 0 5px; font-size: 8.800px; line-height: 13px; color: #222; background: rgba(255,255,255,.6); white-space: nowrap; }

/* footer */
.footer { height: 94px; overflow: hidden; }
.foot-top { height: 66px; background: #333438; padding-top: 7px; border-top: 1px solid #555; }
.foot-line { color: #eee; font-size: 12.150px; line-height: 23px; text-align: center; }
.foot-line2 { font-size: 11.300px; margin-top: -1px; }
.ceg { display: inline-block; font-size: 15px; line-height: 12px; margin: 0 2px; font-weight: 800; vertical-align: -1px; }
.c-g { color: #9ccc3c; }
.c-b { color: #2f9fd8; }
.foot-links { height: 60px; background: #43444e; position: relative; }
.foot-h { position: absolute; top: 16px; font-size: 20.700px; color: #c2c3c8; line-height: 24px; white-space: nowrap; }
.h-1 { left: 194px; }
.h-2 { left: 659px; }
.h-3 { left: 1187px; }
```
